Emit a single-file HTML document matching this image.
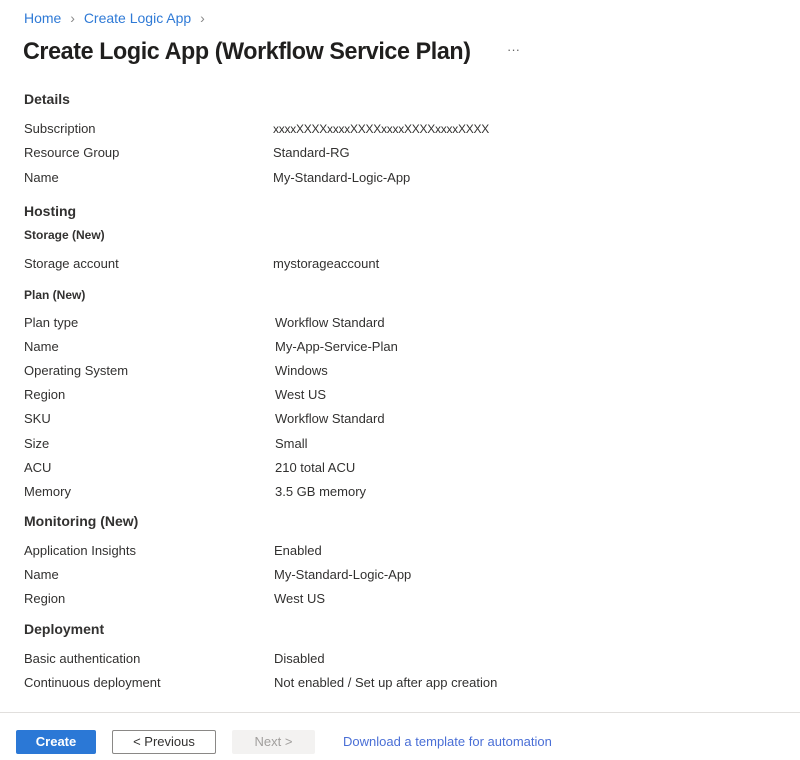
<!DOCTYPE html>
<html><head><meta charset="utf-8"><style>
body{margin:0;width:800px;height:760px;background:#fff;font-family:"Liberation Sans",sans-serif;color:#323130;position:relative;overflow:hidden}
.t{position:absolute;font-size:13px;line-height:18px;white-space:nowrap;margin-top:1px}
.h{font-weight:bold;font-size:14px;color:#323130}
.s{font-weight:bold;font-size:12px}
.v{left:273px}
a{color:#0f6cbd;text-decoration:none}
.btn{position:absolute;top:730px;height:24px;box-sizing:border-box;font-size:13px;line-height:22px;text-align:center;border-radius:2px}
</style></head><body>
<div class="t" style="left:24px;top:8px;font-size:14px"><a style="color:#2f7ad6">Home</a> <span style="color:#888;margin:0 5px">&#8250;</span> <a style="color:#2f7ad6">Create Logic App</a> <span style="color:#888;margin-left:5px">&#8250;</span></div>
<div class="t" style="left:23px;top:35px;font-size:24px;line-height:32px;font-weight:bold;color:#201f1e;letter-spacing:-0.4px;transform:scaleX(0.97);transform-origin:left">Create Logic App (Workflow Service Plan)</div>
<div class="t" style="left:507px;top:40px;color:#666">&middot;&middot;&middot;</div>

<div class="t h" style="left:24px;top:89px">Details</div>
<div class="t" style="left:24px;top:119px">Subscription</div><div class="t v" style="top:119px;font-size:12px;letter-spacing:-0.25px">xxxxXXXXxxxxXXXXxxxxXXXXxxxxXXXX</div>
<div class="t" style="left:24px;top:143px">Resource Group</div><div class="t v" style="top:143px">Standard-RG</div>
<div class="t" style="left:24px;top:168px">Name</div><div class="t v" style="top:168px">My-Standard-Logic-App</div>

<div class="t h" style="left:24px;top:201px">Hosting</div>
<div class="t s" style="left:24px;top:225px">Storage (New)</div>
<div class="t" style="left:24px;top:254px">Storage account</div><div class="t v" style="top:254px">mystorageaccount</div>
<div class="t s" style="left:24px;top:285px">Plan (New)</div>
<div class="t" style="left:24px;top:313px">Plan type</div><div class="t" style="left:275px;top:313px">Workflow Standard</div>
<div class="t" style="left:24px;top:337px">Name</div><div class="t" style="left:275px;top:337px">My-App-Service-Plan</div>
<div class="t" style="left:24px;top:361px">Operating System</div><div class="t" style="left:275px;top:361px">Windows</div>
<div class="t" style="left:24px;top:385px">Region</div><div class="t" style="left:275px;top:385px">West US</div>
<div class="t" style="left:24px;top:409px">SKU</div><div class="t" style="left:275px;top:409px">Workflow Standard</div>
<div class="t" style="left:24px;top:434px">Size</div><div class="t" style="left:275px;top:434px">Small</div>
<div class="t" style="left:24px;top:458px">ACU</div><div class="t" style="left:275px;top:458px">210 total ACU</div>
<div class="t" style="left:24px;top:482px">Memory</div><div class="t" style="left:275px;top:482px">3.5 GB memory</div>

<div class="t h" style="left:24px;top:511px">Monitoring (New)</div>
<div class="t" style="left:24px;top:541px">Application Insights</div><div class="t" style="left:274px;top:541px">Enabled</div>
<div class="t" style="left:24px;top:565px">Name</div><div class="t" style="left:274px;top:565px">My-Standard-Logic-App</div>
<div class="t" style="left:24px;top:589px">Region</div><div class="t" style="left:274px;top:589px">West US</div>

<div class="t h" style="left:24px;top:619px">Deployment</div>
<div class="t" style="left:24px;top:649px">Basic authentication</div><div class="t" style="left:274px;top:649px">Disabled</div>
<div class="t" style="left:24px;top:673px">Continuous deployment</div><div class="t" style="left:274px;top:673px">Not enabled / Set up after app creation</div>

<div style="position:absolute;left:0;top:712px;width:800px;height:1px;background:#e1dfdd"></div>
<div class="btn" style="left:16px;width:80px;background:#2b78d6;color:#fff;font-weight:bold;line-height:24px">Create</div>
<div class="btn" style="left:112px;width:104px;border:1px solid #8a8886;color:#323130">&lt; Previous</div>
<div class="btn" style="left:232px;width:83px;background:#f3f2f1;color:#a19f9d;line-height:24px">Next &gt;</div>
<div class="t" style="left:343px;top:732px;color:#4a6fd6">Download a template for automation</div>
</body></html>
